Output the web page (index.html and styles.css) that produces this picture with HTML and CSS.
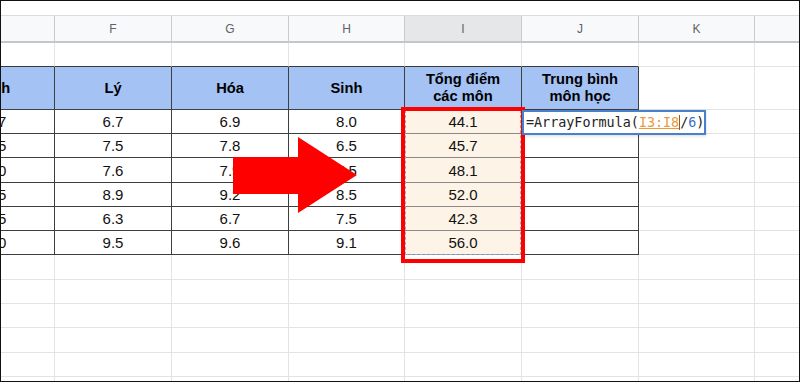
FILE: index.html
```html
<!DOCTYPE html>
<html lang="vi">
<head>
<meta charset="utf-8">
<title>Sheet</title>
<link rel="stylesheet" href="styles.css">
</head>
<body>
<div class="frame">
  <div class="band"></div>
  <div class="viewport">
    <div class="sheet">
      <!-- column headers -->
      <div class="ch"></div><div class="ch">F</div><div class="ch">G</div><div class="ch">H</div><div class="ch sel">I</div><div class="ch">J</div><div class="ch">K</div><div class="ch"></div>
      <!-- row 1 -->
      <div class="c top"></div><div class="c top"></div><div class="c top"></div><div class="c top"></div><div class="c top"></div><div class="c top"></div><div class="c"></div><div class="c"></div>
      <!-- row 2 header -->
      <div class="t h">Anh</div><div class="t h">Lý</div><div class="t h">Hóa</div><div class="t h">Sinh</div><div class="t h">Tổng điểm<br>các môn</div><div class="t h">Trung bình<br>môn học</div><div class="c"></div><div class="c"></div>
      <!-- row 3 -->
      <div class="t">8.7</div><div class="t">6.7</div><div class="t">6.9</div><div class="t">8.0</div><div class="t hl">44.1</div><div class="t"></div><div class="c"></div><div class="c"></div>
      <!-- row 4 -->
      <div class="t">7.5</div><div class="t">7.5</div><div class="t">7.8</div><div class="t">6.5</div><div class="t hl">45.7</div><div class="t"></div><div class="c"></div><div class="c"></div>
      <!-- row 5 -->
      <div class="t">9.0</div><div class="t">7.6</div><div class="t">7.9</div><div class="t">7.5</div><div class="t hl">48.1</div><div class="t"></div><div class="c"></div><div class="c"></div>
      <!-- row 6 -->
      <div class="t">8.5</div><div class="t">8.9</div><div class="t">9.2</div><div class="t">8.5</div><div class="t hl">52.0</div><div class="t"></div><div class="c"></div><div class="c"></div>
      <!-- row 7 -->
      <div class="t">6.5</div><div class="t">6.3</div><div class="t">6.7</div><div class="t">7.5</div><div class="t hl">42.3</div><div class="t"></div><div class="c"></div><div class="c"></div>
      <!-- row 8 -->
      <div class="t">9.0</div><div class="t">9.5</div><div class="t">9.6</div><div class="t">9.1</div><div class="t hl">56.0</div><div class="t"></div><div class="c"></div><div class="c"></div>
      <!-- empty rows -->
      <div class="c"></div><div class="c"></div><div class="c"></div><div class="c"></div><div class="c"></div><div class="c"></div><div class="c"></div><div class="c"></div>
      <div class="c"></div><div class="c"></div><div class="c"></div><div class="c"></div><div class="c"></div><div class="c"></div><div class="c"></div><div class="c"></div>
      <div class="c"></div><div class="c"></div><div class="c"></div><div class="c"></div><div class="c"></div><div class="c"></div><div class="c"></div><div class="c"></div>
      <div class="c"></div><div class="c"></div><div class="c"></div><div class="c"></div><div class="c"></div><div class="c"></div><div class="c"></div><div class="c"></div>
      <div class="c"></div><div class="c"></div><div class="c"></div><div class="c"></div><div class="c"></div><div class="c"></div><div class="c"></div><div class="c"></div>
      <div class="c"></div><div class="c"></div><div class="c"></div><div class="c"></div><div class="c"></div><div class="c"></div><div class="c"></div><div class="c"></div>
    </div>
  </div>

  <div class="range"></div>
  <div class="redbox"></div>
  <div class="editor"><span class="eq">=ArrayFormula(</span><span class="ref">I3:I8</span><span class="caret"></span><span class="eq">/</span><span class="num">6</span><span class="eq">)</span></div>

  <svg class="arrow" width="800" height="382" viewBox="0 0 800 382">
    <polygon points="233,157 298,157 298,137 357,175 298,213 298,194 233,194" fill="#ff0000"/>
  </svg>
</div>
</body>
</html>
```

FILE: styles.css
```css
html, body {
  margin: 0;
  padding: 0;
  background: #fff;
}

.frame {
  position: relative;
  width: 800px;
  height: 382px;
  box-sizing: border-box;
  border: 1px solid #111;
  overflow: hidden;
  background: #fff;
  font-family: "Liberation Sans", Arial, sans-serif;
}

.band {
  height: 14px;
}

.viewport {
  overflow: hidden;
  border-top: 1px solid #dadce0;
}

.sheet {
  display: grid;
  grid-template-columns: 117px 117px 117px 116px 117px 117px 116px 117px;
  grid-template-rows: 27px 24px 43px 24px 24px 25px 24px 24px 24px 25px 24px 24px 25px 24px 24px;
  margin-left: -63px;
  width: max-content;
}

.sheet > div {
  box-sizing: border-box;
  display: flex;
  align-items: center;
  justify-content: center;
  text-align: center;
  white-space: nowrap;
}

.ch {
  background: #f8f9fa;
  border-right: 1px solid #c8cacc;
  border-bottom: 2px solid #c4c6c8;
  color: #5f6368;
  font-size: 12px;
  font-family: "Liberation Sans", Arial, sans-serif;
}

.ch.sel {
  background: #e6e7e9;
}

.c {
  border-right: 1px solid #e2e3e3;
  border-bottom: 1px solid #e2e3e3;
}

.c.top {
  border-bottom: 1px solid #3a3a3a;
}

.t {
  border-right: 1px solid #3f3f3f;
  border-bottom: 1px solid #3f3f3f;
  font-size: 15px;
  color: #111;
}

.t.h {
  background: #a4c2f4;
  font-weight: bold;
  font-size: 14.7px;
  line-height: 17px;
  color: #000;
}

.t.hl {
  background: #fdf3e6;
  border-bottom-color: #8a8a8a;
}

.range {
  position: absolute;
  left: 404px;
  top: 109px;
  width: 116px;
  height: 145px;
  box-sizing: border-box;
  border: 1px dashed #94aac6;
}

.redbox {
  position: absolute;
  left: 400px;
  top: 106px;
  width: 124px;
  height: 156px;
  box-sizing: border-box;
  border: 4px solid #ff0000;
}

.editor {
  position: absolute;
  left: 521px;
  top: 109px;
  width: 184px;
  height: 25px;
  box-sizing: border-box;
  border: 2px solid #4a7fcb;
  background: #fff;
  box-shadow: 0 1px 3px rgba(0, 0, 0, 0.15);
  padding-left: 2px;
  display: flex;
  align-items: center;
  font-family: "DejaVu Sans Mono", "Liberation Mono", monospace;
  font-size: 13.4px;
  white-space: nowrap;
  color: #222;
}

.ref {
  color: #e99a3c;
  text-decoration: underline;
  text-decoration-color: #e99a3c;
}

.caret {
  display: inline-block;
  width: 0;
  height: 15px;
  border-left: 1px solid #9a5a10;
}

.num {
  color: #3b6fd0;
}

.arrow {
  position: absolute;
  left: -1px;
  top: -1px;
}
```
